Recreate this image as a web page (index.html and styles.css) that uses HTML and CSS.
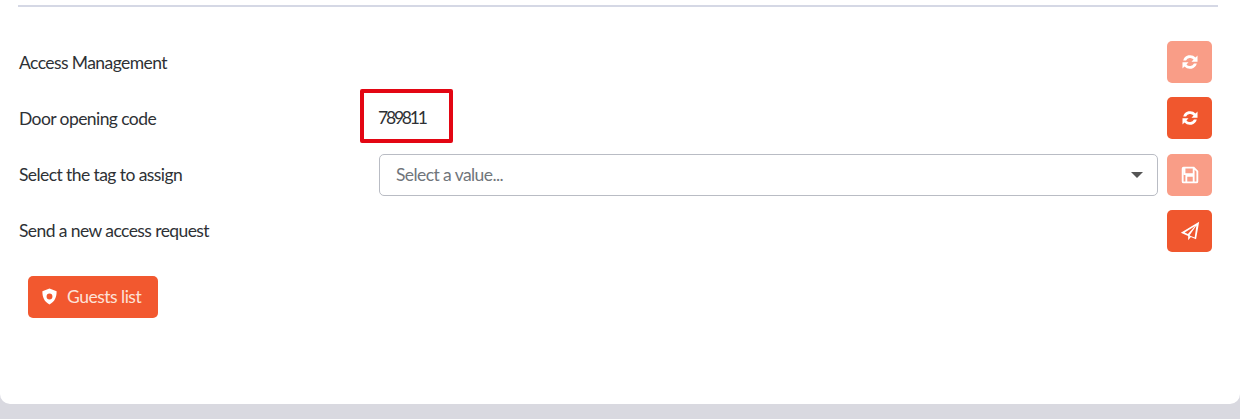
FILE: index.html
```html
<!DOCTYPE html>
<html lang="en">
<head>
<meta charset="utf-8">
<title>Access Management</title>
<link rel="stylesheet" href="styles.css">
</head>
<body>
<main class="card">
  <hr class="rule">
  <section class="rows">
    <div class="row">
      <span class="label">Access Management</span>
      <span class="value"></span>
      <button class="icon-btn faded" type="button" aria-label="Refresh">
        <svg viewBox="0 0 24 24" class="ico"><path d="M4.6 10.4A7.8 7.8 0 0 1 18 7.2l2.2-2.2v6.6h-6.6l2.3-2.3a4.900 4.900 0 0 0-8.200 1.100zM19.400 13.600A7.800 7.800 0 0 1 6 16.800L3.800 19v-6.600h6.600l-2.300 2.300a4.900 4.900 0 0 0 8.200-1.100z"/></svg>
      </button>
    </div>
    <div class="row">
      <span class="label">Door opening code</span>
      <span class="value code-cell"><span class="code">789811</span></span>
      <button class="icon-btn" type="button" aria-label="Refresh code">
        <svg viewBox="0 0 24 24" class="ico"><path d="M4.6 10.4A7.8 7.8 0 0 1 18 7.2l2.2-2.2v6.6h-6.6l2.3-2.3a4.900 4.900 0 0 0-8.200 1.100zM19.400 13.600A7.800 7.800 0 0 1 6 16.800L3.800 19v-6.600h6.600l-2.300 2.300a4.900 4.900 0 0 0 8.200-1.100z"/></svg>
      </button>
    </div>
    <div class="row">
      <span class="label">Select the tag to assign</span>
      <span class="value">
        <span class="select"><span class="placeholder">Select a value...</span><span class="caret"></span></span>
      </span>
      <button class="icon-btn faded" type="button" aria-label="Save">
        <svg viewBox="0 0 24 24" class="ico"><path fill-rule="evenodd" d="M5 3h11.500L21 7.500V19a2 2 0 0 1-2 2H5a2 2 0 0 1-2-2V5a2 2 0 0 1 2-2zm2 2v5h8V5zM5 5v14h2v-7h10v7h2V8.300L17 6.200V12H5.200zM9 14v5h6v-5z"/></svg>
      </button>
    </div>
    <div class="row">
      <span class="label">Send a new access request</span>
      <span class="value"></span>
      <button class="icon-btn" type="button" aria-label="Send">
        <svg viewBox="0 0 24 24" class="ico"><path fill-rule="evenodd" d="M22 2 18.600 21l-5.700-2.400L10 22v-4.600L2 14zM17.600 6.600 6.200 13.700l3.500 1.500zM19 6l-7.600 10.900 5.700 2.200zM11.500 15.800l-.1 2.300 1-1.300z"/></svg>
      </button>
    </div>
  </section>
  <button class="guests" type="button">
    <svg viewBox="0 0 24 24" class="shield"><path fill-rule="evenodd" d="M12 2l9 3.400c0 7.500-2.400 13.400-9 16.600C5.400 18.800 3 12.900 3 5.400zm0 6.300a3.700 3.700 0 1 0 0 7.400 3.700 3.700 0 0 0 0-7.400z"/></svg>
    Guests list
  </button>
</main>
</body>
</html>
```

FILE: styles.css
```css
* { box-sizing: border-box; }

html, body { height: 100%; }

body {
  margin: 0;
  background: #d9d9e0;
  font-family: "Lato", "Liberation Sans", sans-serif;
  color: #2e3135;
  overflow: hidden;
}

.card {
  height: 404px;
  background: #fff;
  border-radius: 0 0 10px 10px;
  padding: 5px 28px 0 18px;
}

.rule {
  margin: 0 -6px 0 0;
  height: 2px;
  border: 0;
  background: #d5d8e5;
}

.rows {
  display: grid;
  grid-auto-rows: 42px;
  row-gap: 14.3px;
  padding-top: 34px;
}

.row {
  display: grid;
  grid-template-columns: 361px 779px 54px;
  align-items: center;
  font-size: 17.5px;
  letter-spacing: -0.58px;
}

.label { padding-left: 1px; }

.value { display: flex; }

.code-cell { position: relative; height: 42px; }

.code {
  position: absolute;
  left: -19px;
  top: -8px;
  width: 93px;
  height: 54px;
  border: 4px solid #e30613;
  border-radius: 2px;
  padding-left: 14px;
  line-height: 50px;
  letter-spacing: -2.2px;
}

.select {
  flex: 1;
  height: 42px;
  display: flex;
  align-items: center;
  justify-content: space-between;
  border: 1px solid #b9bcc4;
  border-radius: 5px;
  padding: 0 14px 0 16px;
  background: #fff;
}

.placeholder { color: #70757b; }

.caret {
  width: 0;
  height: 0;
  border-left: 6px solid transparent;
  border-right: 6px solid transparent;
  border-top: 6px solid #555;
}

.icon-btn {
  justify-self: end;
  width: 45px;
  height: 42px;
  padding: 0;
  border: 0;
  border-radius: 5px;
  background: #f0572e;
  display: flex;
  align-items: center;
  justify-content: center;
}

.faded { background: #f99d87; }

.ico { width: 22px; height: 22px; fill: #fff; }

.guests {
  margin: 24px 0 0 10px;
  width: 130px;
  height: 42px;
  display: flex;
  align-items: center;
  gap: 8px;
  padding: 0 0 0 12px;
  border: 0;
  border-radius: 5px;
  background: #f2582f;
  color: #fde2d8;
  font-family: inherit;
  font-size: 17.5px;
  letter-spacing: -0.5px;
}

.shield { width: 19px; height: 19px; fill: #fff; flex: none; }
```
